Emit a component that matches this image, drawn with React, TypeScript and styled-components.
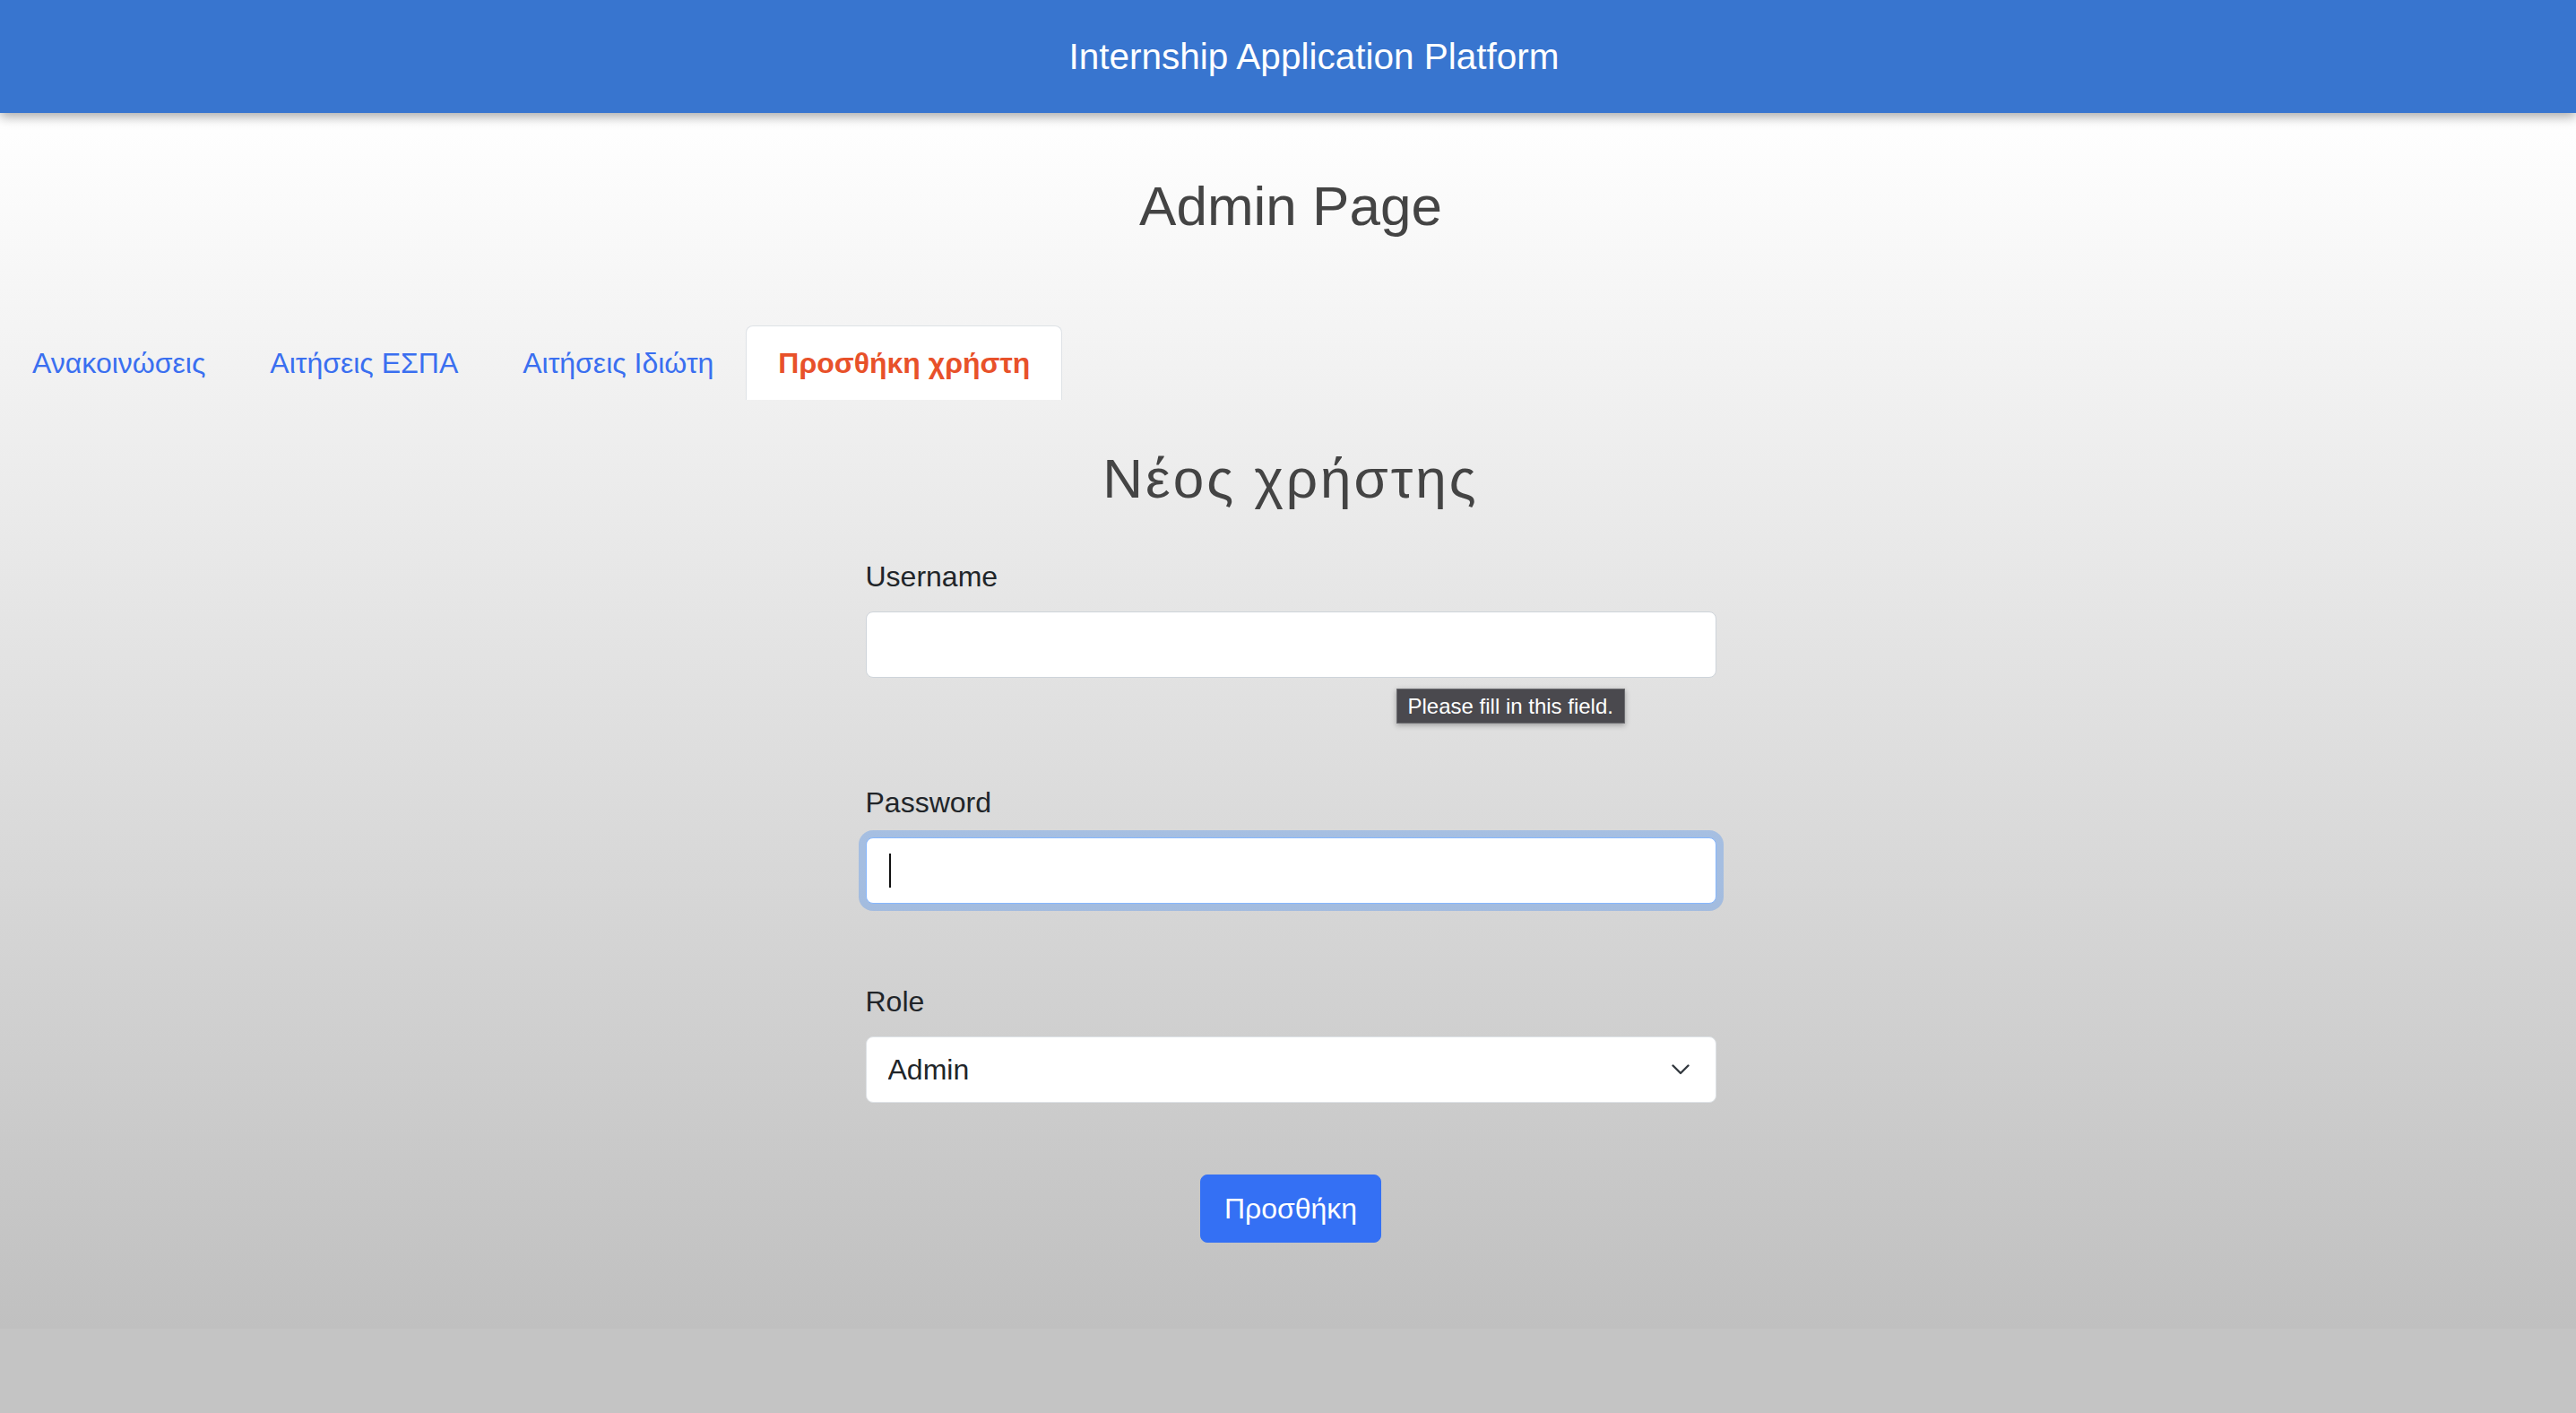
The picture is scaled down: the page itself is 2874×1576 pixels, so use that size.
import styled, { createGlobalStyle } from 'styled-components';

const GlobalStyle = createGlobalStyle`
  html, body {
    margin: 0;
    padding: 0;
  }
  body {
    background: #c4c4c4;
    font-family: "Liberation Sans", Arial, sans-serif;
    color: #212529;
  }
`;

const Header = styled.header`
  position: relative;
  z-index: 1;
  height: 126px;
  display: flex;
  align-items: center;
  justify-content: center;
  padding-left: 58px;
  background: #3875cf;
  box-shadow: 0 4px 12px rgba(0, 0, 0, 0.35);
`;

const HeaderTitle = styled.span`
  color: #fff;
  font-size: 40.5px;
  line-height: 48px;
`;

const Main = styled.main`
  padding: 67px 0 96px 6px;
  background: linear-gradient(#ffffff, #c0c0c0);
`;

const PageTitle = styled.h2`
  margin: 0;
  font-size: 62px;
  line-height: 74px;
  font-weight: 400;
  color: #444;
  text-align: center;
`;

const TabBar = styled.nav`
  display: flex;
  margin: 96px 0 0 -6px;
`;

const Tab = styled.a<{ $active?: boolean }>`
  padding: 17px 35px;
  font-size: 32px;
  line-height: 48px;
  text-decoration: none;
  border: 1px solid transparent;
  border-bottom: none;
  border-radius: 8px 8px 0 0;
  color: ${p => (p.$active ? '#e8512a' : '#3a6ff0')};
  font-weight: ${p => (p.$active ? 700 : 400)};
  background: ${p => (p.$active ? '#fff' : 'transparent')};
  border-color: ${p => (p.$active ? '#dee2e6' : 'transparent')};
  cursor: pointer;
`;

const FormTitle = styled.h2`
  margin: 51px 0 0;
  font-size: 62px;
  line-height: 74px;
  font-weight: 400;
  letter-spacing: 3px;
  color: #444;
  text-align: center;
`;

const Form = styled.form`
  width: 949px;
  margin: 0 auto;
`;

const Field = styled.div<{ $space: number }>`
  display: flex;
  flex-direction: column;
  gap: 15px;
  margin-top: ${p => p.$space}px;
`;

const Label = styled.label`
  font-size: 32px;
  line-height: 48px;
  color: #212529;
`;

const InputWrap = styled.div`
  position: relative;
`;

const TextInput = styled.input<{ $focused?: boolean }>`
  display: block;
  box-sizing: border-box;
  width: 100%;
  height: 74px;
  padding: 12px 24px;
  font-family: inherit;
  font-size: 32px;
  color: #212529;
  background: #fff;
  border: 1px solid ${p => (p.$focused ? '#86b7fe' : '#ced4da')};
  border-radius: 8px;
  box-shadow: ${p => (p.$focused ? '0 0 0 8px rgba(13, 110, 253, 0.25)' : 'none')};
  outline: none;
`;

const Caret = styled.span`
  position: absolute;
  left: 26px;
  top: 18px;
  width: 2px;
  height: 38px;
  background: #111;
`;

const Tooltip = styled.div`
  position: absolute;
  left: 592px;
  top: calc(100% + 12px);
  padding: 5px 12px;
  font-size: 24px;
  line-height: 27px;
  color: #fff;
  white-space: nowrap;
  background: #4a494e;
  border: 1px solid #6c6c70;
  box-shadow: 0 2px 6px rgba(0, 0, 0, 0.3);
`;

const Select = styled.select`
  display: block;
  box-sizing: border-box;
  width: 100%;
  height: 74px;
  padding: 12px 72px 12px 24px;
  font-family: inherit;
  font-size: 32px;
  color: #212529;
  background: #fff;
  border: 1px solid #dee2e6;
  border-radius: 8px;
  appearance: none;
  outline: none;
`;

const Chevron = styled.svg`
  position: absolute;
  right: 30px;
  top: 50%;
  transform: translateY(-50%);
  pointer-events: none;
`;

const SubmitButton = styled.button`
  display: block;
  margin: 80px auto 0;
  padding: 13px 26px;
  font-family: inherit;
  font-size: 32px;
  line-height: 48px;
  color: #fff;
  background: #3470f4;
  border: 1px solid #3470f4;
  border-radius: 8px;
  cursor: pointer;
`;

const tabs = ['Ανακοινώσεις', 'Αιτήσεις ΕΣΠΑ', 'Αιτήσεις Ιδιώτη', 'Προσθήκη χρήστη'];

const App = () => {
  return (
    <>
      <GlobalStyle />
      <Header>
        <HeaderTitle>Internship Application Platform</HeaderTitle>
      </Header>
      <Main>
        <PageTitle>Admin Page</PageTitle>
        <TabBar>
          {tabs.map((t, i) => (
            <Tab key={t} $active={i === 3}>
              {t}
            </Tab>
          ))}
        </TabBar>
        <FormTitle>Νέος χρήστης</FormTitle>
        <Form onSubmit={e => e.preventDefault()}>
          <Field $space={48}>
            <Label htmlFor="username">Username</Label>
            <InputWrap>
              <TextInput id="username" type="text" />
              <Tooltip>Please fill in this field.</Tooltip>
            </InputWrap>
          </Field>
          <Field $space={115}>
            <Label htmlFor="password">Password</Label>
            <InputWrap>
              <TextInput id="password" type="password" $focused />
              <Caret />
            </InputWrap>
          </Field>
          <Field $space={85}>
            <Label htmlFor="role">Role</Label>
            <InputWrap>
              <Select id="role" defaultValue="admin">
                <option value="admin">Admin</option>
                <option value="student">Student</option>
                <option value="company">Company</option>
              </Select>
              <Chevron width="20" height="12" viewBox="0 0 20 12" fill="none">
                <path d="M1.5 1.5 10 10l8.5-8.5" stroke="#343a40" strokeWidth="2.4" strokeLinecap="round" strokeLinejoin="round" />
              </Chevron>
            </InputWrap>
          </Field>
          <SubmitButton type="submit">Προσθήκη</SubmitButton>
        </Form>
      </Main>
    </>
  );
};

export default App;
